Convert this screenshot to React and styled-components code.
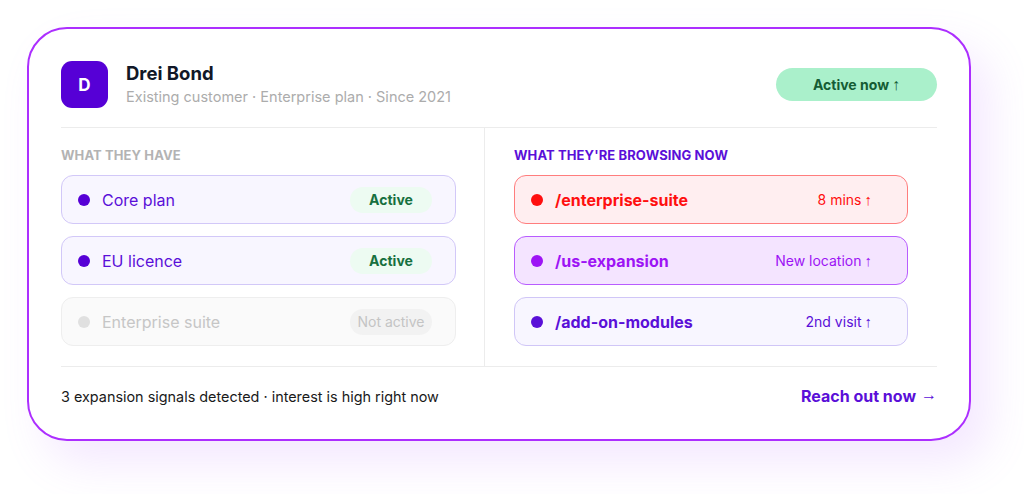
import React from "react";
import styled, { createGlobalStyle } from "styled-components";

const Global = createGlobalStyle`
  html, body { margin: 0; padding: 0; background: #ffffff; }
  body { font-family: "Inter", "Noto Sans", sans-serif; -webkit-font-smoothing: antialiased; }
`;

const Page = styled.div`
  width: 1024px;
  height: 494px;
  padding: 27px 0 0 27px;
  box-sizing: border-box;
  overflow: hidden;
`;

const Card = styled.div`
  width: 944px;
  height: 414px;
  box-sizing: border-box;
  border: 2px solid #ac2eff;
  border-radius: 40px;
  background: #fff;
  padding: 32px 32px 0 32px;
  box-shadow: 18px 22px 44px rgba(185, 110, 255, 0.16);
  display: flex;
  flex-direction: column;
`;

const Header = styled.div`
  display: flex;
  align-items: center;
  height: 47px;
  padding-bottom: 19px;
  border-bottom: 1px solid #ececec;
`;

const Avatar = styled.div`
  width: 47px;
  height: 47px;
  border-radius: 11px;
  background: #5600d6;
  color: #fff;
  font-weight: 700;
  font-size: 17px;
  display: flex;
  align-items: center;
  justify-content: center;
  flex: none;
`;

const Who = styled.div`
  margin-left: 18px;
  display: flex;
  flex-direction: column;
  gap: 3px;
  flex: 1;
`;

const Name = styled.div`
  font-size: 18.5px;
  font-weight: 700;
  color: #111827;
  line-height: 22px;
`;

const Sub = styled.div`
  font-size: 14.5px;
  color: #acacac;
  line-height: 20px;
`;

const Arrow = styled.span`
  font-family: "Liberation Sans", "DejaVu Sans", sans-serif;
  font-weight: 400;
  font-size: ${(p) => p.$size || "15px"};
  vertical-align: ${(p) => p.$lift || "0"};
  margin-left: ${(p) => p.$gap || "3px"};
`;

const Pill = styled.div`
  width: 161px;
  height: 33px;
  border-radius: 17px;
  background: #aaf0cb;
  color: #155c34;
  font-weight: 700;
  font-size: 14px;
  display: flex;
  align-items: center;
  justify-content: center;
`;

const Columns = styled.div`
  display: grid;
  grid-template-columns: 423px 1fr;
  border-bottom: 1px solid #ececec;
`;

const Col = styled.div`
  padding: ${(p) => (p.$right ? "19px 29px 20px 29px" : "19px 28px 20px 0")};
  border-left: ${(p) => (p.$right ? "1px solid #ececec" : "none")};
  display: flex;
  flex-direction: column;
  gap: 12px;
`;

const ColTitle = styled.div`
  font-size: 13px;
  font-weight: 700;
  line-height: 16px;
  color: ${(p) => p.$color};
  letter-spacing: 0.1px;
  text-transform: uppercase;
`;

const Rows = styled.div`
  display: flex;
  flex-direction: column;
  gap: 12px;
`;

const Row = styled.div`
  height: 49px;
  box-sizing: border-box;
  border-radius: 12px;
  border: 1px solid ${(p) => p.$border};
  background: ${(p) => p.$bg};
  display: flex;
  align-items: center;
  padding: ${(p) => (p.$right ? "0 35px 0 16px" : "0 23px 0 16px")};
`;

const Dot = styled.span`
  width: 12px;
  height: 12px;
  border-radius: 50%;
  background: ${(p) => p.$color};
  flex: none;
`;

const Label = styled.span`
  margin-left: 12px;
  font-size: 16px;
  font-weight: ${(p) => (p.$bold ? 700 : 400)};
  color: ${(p) => p.$color};
  flex: 1;
`;

const Badge = styled.span`
  width: 82px;
  height: 26px;
  border-radius: 13px;
  background: ${(p) => p.$bg};
  color: ${(p) => p.$color};
  font-size: 14px;
  font-weight: ${(p) => (p.$bold ? 700 : 400)};
  display: flex;
  align-items: center;
  justify-content: center;
`;

const Meta = styled.span`
  font-size: 14px;
  color: ${(p) => p.$color};
`;

const Footer = styled.div`
  display: flex;
  align-items: center;
  justify-content: space-between;
  padding-top: 19px;
  height: 20px;
`;

const FootText = styled.span`
  font-size: 14.4px;
  color: #1a1a1a;
`;

const Cta = styled.a`
  font-size: 16px;
  font-weight: 700;
  color: #5a0fd8;
  text-decoration: none;
`;

const have = [
  { label: "Core plan", badge: "Active", on: true },
  { label: "EU licence", badge: "Active", on: true },
  { label: "Enterprise suite", badge: "Not active", on: false },
];

const browsing = [
  { label: "/enterprise-suite", meta: "8 mins", bg: "#ffeef0", border: "#ff7d7d", color: "#ff0f0f" },
  { label: "/us-expansion", meta: "New location", bg: "#f4e4ff", border: "#b85cff", color: "#9d14f5" },
  { label: "/add-on-modules", meta: "2nd visit", bg: "#f8f6ff", border: "#d0c6f7", color: "#5a0fd8" },
];

export default function App() {
  return (
    <Page>
      <Global />
      <Card>
        <Header>
          <Avatar>D</Avatar>
          <Who>
            <Name>Drei Bond</Name>
            <Sub>Existing customer · Enterprise plan · Since 2021</Sub>
          </Who>
          <Pill>
            Active now<Arrow $size="16px">↑</Arrow>
          </Pill>
        </Header>
        <Columns>
          <Col>
            <ColTitle $color="#b3b3b3">What they have</ColTitle>
            <Rows>
              {have.map((r) => (
                <Row
                  key={r.label}
                  $bg={r.on ? "#f8f6ff" : "#fafafa"}
                  $border={r.on ? "#d2c8f8" : "#eeeeee"}
                >
                  <Dot $color={r.on ? "#5600d6" : "#e0e0e0"} />
                  <Label $color={r.on ? "#5a0fd8" : "#c6c6c6"}>{r.label}</Label>
                  <Badge
                    $bg={r.on ? "#edfbf2" : "#f2f2f2"}
                    $color={r.on ? "#17703f" : "#c4c4c4"}
                    $bold={r.on}
                  >
                    {r.badge}
                  </Badge>
                </Row>
              ))}
            </Rows>
          </Col>
          <Col $right>
            <ColTitle $color="#5a0fd8">What they're browsing now</ColTitle>
            <Rows>
              {browsing.map((r) => (
                <Row key={r.label} $right $bg={r.bg} $border={r.border}>
                  <Dot $color={r.color} />
                  <Label $bold $color={r.color}>{r.label}</Label>
                  <Meta $color={r.color}>
                    {r.meta}
                    <Arrow $size="15px">↑</Arrow>
                  </Meta>
                </Row>
              ))}
            </Rows>
          </Col>
        </Columns>
        <Footer>
          <FootText>3 expansion signals detected · interest is high right now</FootText>
          <Cta href="#">
            Reach out now<Arrow $gap="5px" $size="16px" $lift="2px">→</Arrow>
          </Cta>
        </Footer>
      </Card>
    </Page>
  );
}
